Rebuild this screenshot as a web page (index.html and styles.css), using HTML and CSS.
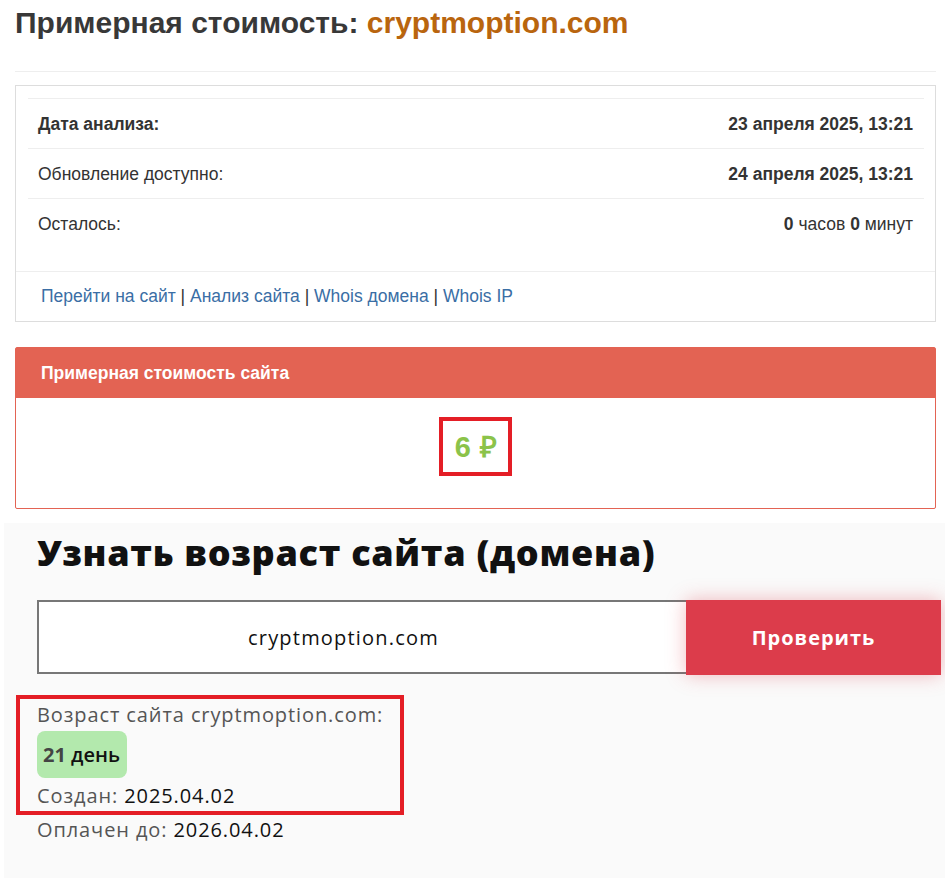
FILE: index.html
```
<!DOCTYPE html>
<html lang="ru">
<head>
<meta charset="utf-8">
<title>Примерная стоимость: cryptmoption.com</title>
<link rel="stylesheet" href="styles.css">
</head>
<body>
<div class="top">
  <h1 class="title">Примерная стоимость: <span class="domain">cryptmoption.com</span></h1>
  <div class="info-box">
    <table class="info">
      <tr class="first">
        <td class="label strong">Дата анализа:</td>
        <td class="value"><b>23 апреля 2025, 13:21</b></td>
      </tr>
      <tr>
        <td class="label">Обновление доступно:</td>
        <td class="value"><b>24 апреля 2025, 13:21</b></td>
      </tr>
      <tr>
        <td class="label">Осталось:</td>
        <td class="value"><b>0</b> часов <b>0</b> минут</td>
      </tr>
    </table>
    <div class="links">
      <a href="#">Перейти на сайт</a> | <a href="#">Анализ сайта</a> | <a href="#">Whois домена</a> | <a href="#">Whois IP</a>
    </div>
  </div>
  <div class="panel">
    <div class="panel-head">Примерная стоимость сайта</div>
    <div class="panel-body"><span class="price">6 ₽</span></div>
  </div>
</div>
<section class="age">
  <h2 class="age-title">Узнать возраст сайта (домена)</h2>
  <form class="check">
    <input class="domain-input" type="text" value="cryptmoption.com">
    <button class="check-btn" type="button">Проверить</button>
  </form>
  <div class="result">
    <div class="result-mark">
      <div class="line muted">Возраст сайта cryptmoption.com:</div>
      <div class="badge"><b>21</b> день</div>
      <div class="line created"><span class="muted">Создан:</span> <span class="dark">2025.04.02</span></div>
    </div>
    <div class="line paid"><span class="muted">Оплачен до:</span> <span class="dark">2026.04.02</span></div>
  </div>
</section>
</body>
</html>
```
FILE: styles.css
```
* { box-sizing: border-box; }
html, body { margin: 0; padding: 0; background: #fff; }
body { font-family: "Liberation Sans", Arial, sans-serif; color: #333; }

.top { padding: 0 9px 0 15px; }

.title {
  margin: 0 0 13px;
  padding: 7px 0 32px;
  font-size: 30px;
  line-height: 32px;
  font-weight: bold;
  color: #383838;
  border-bottom: 1px solid #eee;
}
.domain { color: #b9650e; }

.info-box {
  border: 1px solid #ddd;
  padding: 12px 11px 0 12px;
}
.info {
  width: 100%;
  border-collapse: collapse;
  font-size: 17.5px;
  margin-bottom: 23px;
}
.info td {
  border-top: 1px solid #eee;
  padding: 15px 10px 14px 10px;
  line-height: 20px;
  color: #333;
}
.info .value { text-align: right; padding-right: 11px; }
.info .strong { font-weight: bold; }
.links {
  margin: 0 -11px 0 -12px;
  border-top: 1px solid #eee;
  padding: 14px 25px 15px;
  font-size: 17.5px;
  line-height: 20px;
  color: #333;
}
.links a { color: #3a6ea5; text-decoration: none; }

.panel {
  margin-top: 25px;
  border: 1px solid #e36353;
  border-radius: 2px;
}
.panel-head {
  background: #e36353;
  color: #fff;
  font-weight: bold;
  font-size: 17.5px;
  line-height: 20px;
  padding: 15px 25px 15px;
}
.panel-body {
  height: 110px;
  display: flex;
  justify-content: center;
  align-items: flex-start;
  padding-top: 19px;
}
.price {
  display: inline-block;
  border: 4px solid #e41e26;
  padding: 10px 11px 9px 12px;
  color: #8bc34a;
  font-weight: bold;
  font-size: 29px;
  line-height: 32px;
  letter-spacing: 0.5px;
}

.age {
  margin: 14px 0 0 4px;
  background: #fafafa;
  padding: 8px 0 40px 33px;
  font-family: "Open Sans", "DejaVu Sans", sans-serif;
  min-height: 355px;
}
.age-title {
  margin: 0 0 25px;
  font-size: 36px;
  line-height: 44px;
  font-weight: 800;
  letter-spacing: 0.7px;
  color: #111;
}
.check { display: flex; margin: 0; }
.domain-input {
  width: 649px;
  height: 74px;
  border: 2px solid #777;
  border-right: none;
  background: #fff;
  font-family: inherit;
  font-size: 20px;
  letter-spacing: 1.2px;
  color: #111;
  text-align: center;
  padding: 0 38px 0 0;
  outline: none;
}
.check-btn {
  width: 255px;
  height: 75px;
  border: none;
  background: #dc3c4b;
  color: #fff;
  font-family: inherit;
  font-size: 20px;
  font-weight: 700;
  letter-spacing: 1px;
  box-shadow: 0 0 18px rgba(220, 60, 75, 0.35);
}

.result { margin-top: 20px; font-size: 20px; line-height: 24px; letter-spacing: 0.9px; }
.result-mark {
  display: inline-block;
  margin-left: -21px;
  padding: 4px 17px 3px 17px;
  border: 4px solid #e41e26;
}
.line { color: #111; }
.muted { color: #555; }
.dark { color: #111; }
.created { margin-top: 6px; }
.paid { margin-top: 3px; }
.badge {
  display: inline-block;
  margin-top: 4px;
  background: #b3e9ad;
  border-radius: 8px;
  padding: 12px 7px 11px 6px;
  font-weight: 600;
  color: #111;
  font-size: 20px;
  letter-spacing: 0;
}
.badge b { color: #444; font-weight: 700; }
```
